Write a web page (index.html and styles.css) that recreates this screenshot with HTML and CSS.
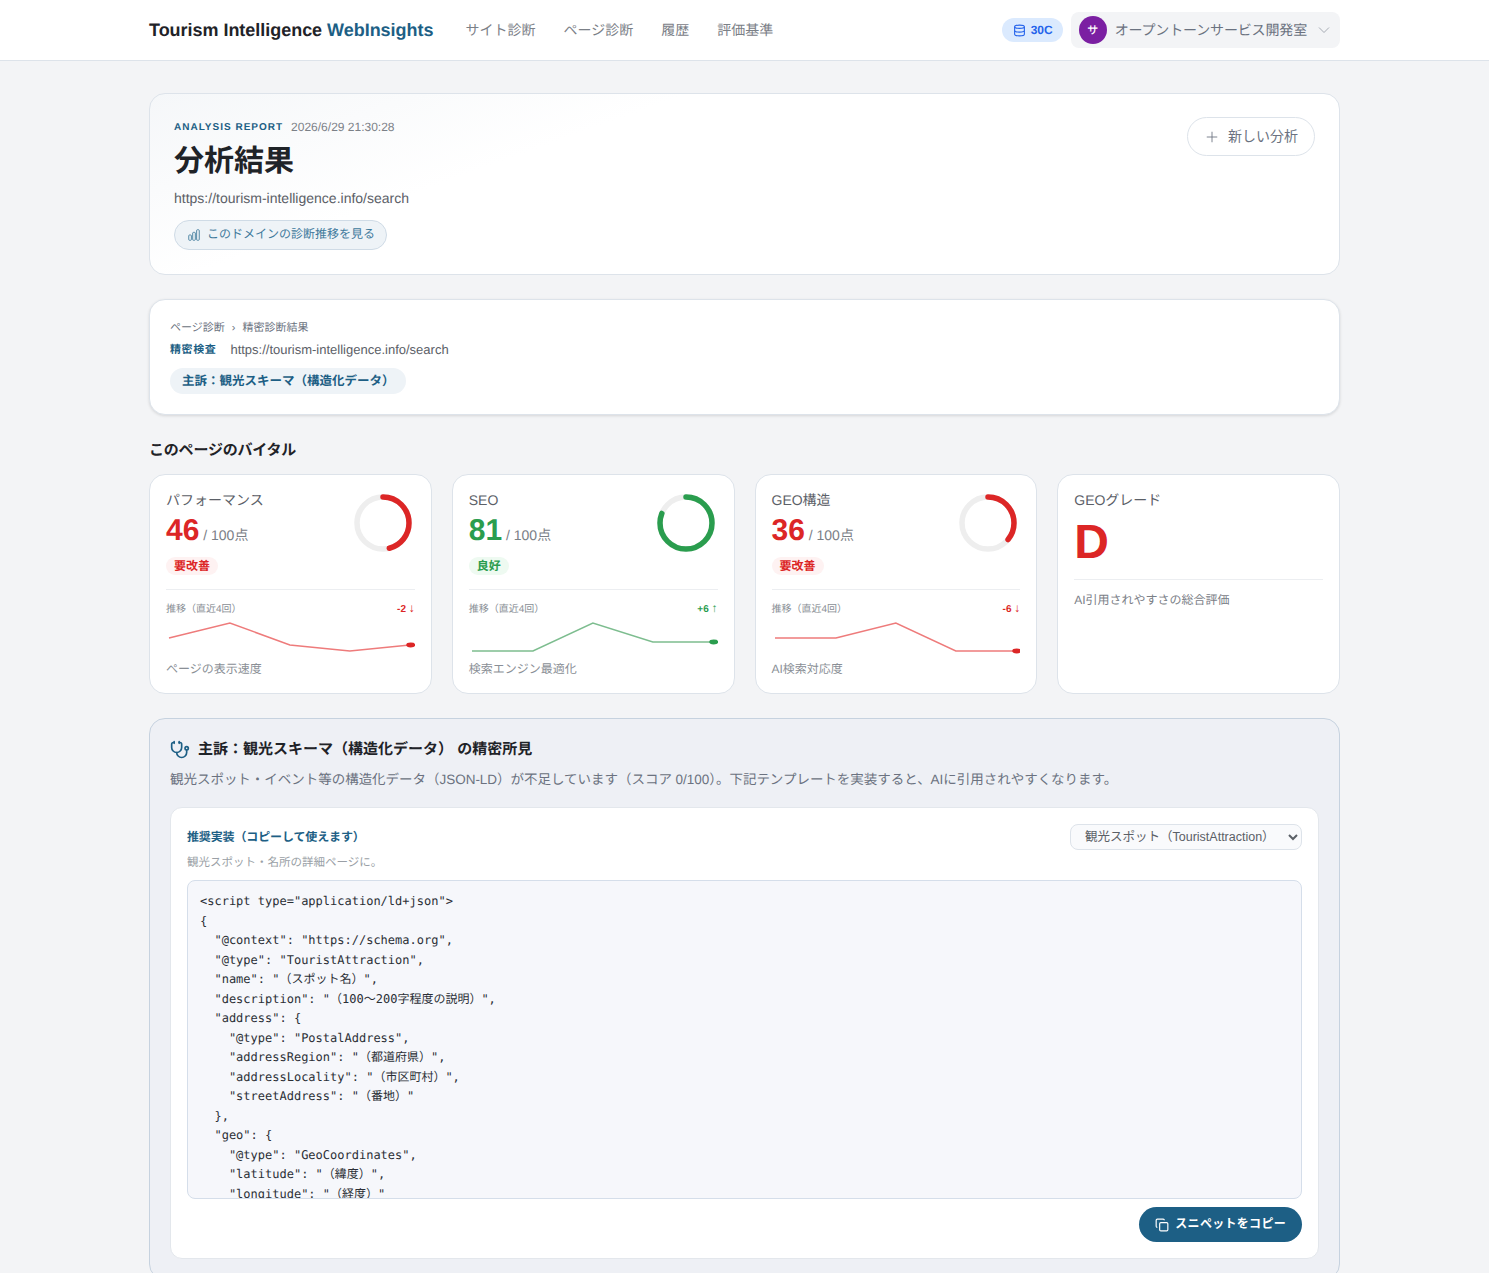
FILE: index.html
```html
<!DOCTYPE html>
<html lang="ja">

<head>
  <title>分析結果 - Tourism Intelligence WebInsights</title>
  <link rel="stylesheet" href="styles.css">
</head>

<body>
  <header class="topbar">
    <div class="topbar-inner">
      <div class="brand">Tourism Intelligence <span class="brand-accent">WebInsights</span></div>
      <nav class="nav">
        <a>サイト診断</a>
        <a>ページ診断</a>
        <a>履歴</a>
        <a>評価基準</a>
      </nav>
      <div class="credit">
        <svg class="credit-icon" viewBox="0 0 24 24" fill="none" stroke="currentColor" stroke-width="2">
          <ellipse cx="12" cy="5" rx="9" ry="3" />
          <path d="M3 5v14a9 3 0 0 0 18 0V5" />
          <path d="M3 12a9 3 0 0 0 18 0" />
        </svg>
        30C
      </div>
      <div class="account">
        <span class="avatar">サ</span>
        <span class="account-name">オープントーンサービス開発室</span>
        <svg class="account-caret" viewBox="0 0 24 24" fill="none" stroke="currentColor" stroke-width="1.5">
          <path d="M2 7l10 10 10-10" />
        </svg>
      </div>
    </div>
  </header>

  <main class="page">
    <section class="card hero">
      <div>
        <div class="hero-meta">
          <span class="eyebrow">ANALYSIS REPORT</span>
          <span class="timestamp">2026/6/29 21:30:28</span>
        </div>
        <h1 class="hero-title">分析結果</h1>
        <div class="hero-url">https://tourism-intelligence.info/search</div>
        <a class="trend-link">
          <svg class="trend-icon" viewBox="0 0 24 24" fill="none" stroke="currentColor" stroke-width="1.5">
            <path d="M3 13.125C3 12.504 3.504 12 4.125 12h2.25c.621 0 1.125.504 1.125 1.125v6.75C7.5 20.496 6.996 21 6.375 21h-2.25A1.125 1.125 0 0 1 3 19.875v-6.75ZM9.75 8.625c0-.621.504-1.125 1.125-1.125h2.25c.621 0 1.125.504 1.125 1.125v11.25c0 .621-.504 1.125-1.125 1.125h-2.25a1.125 1.125 0 0 1-1.125-1.125V8.625ZM16.5 4.125c0-.621.504-1.125 1.125-1.125h2.25C20.496 3 21 3.504 21 4.125v15.75c0 .621-.504 1.125-1.125 1.125h-2.25a1.125 1.125 0 0 1-1.125-1.125V4.125Z" />
          </svg>
          <span class="lift">このドメインの診断推移を見る</span>
        </a>
      </div>
      <button class="new-btn">
        <svg class="new-icon" viewBox="0 0 24 24" fill="none" stroke="currentColor" stroke-width="1.5">
          <path d="M12 3v18M3 12h18" />
        </svg>
        <span class="lift">新しい分析</span>
      </button>
    </section>

    <section class="card detail">
      <div class="crumbs">ページ診断<span class="crumb-sep">›</span>精密診断結果</div>
      <div class="detail-row">
        <span class="detail-label">精密検査</span>
        <span class="detail-url">https://tourism-intelligence.info/search</span>
      </div>
      <span class="complaint">主訴：観光スキーマ（構造化データ）</span>
    </section>

    <h2 class="section-title">このページのバイタル</h2>

    <section class="vitals">
      <div class="vital">
        <div class="vital-top">
          <div>
            <div class="vital-name">パフォーマンス</div>
            <div class="vital-score"><b class="red">46</b> / 100点</div>
            <span class="chip chip-red">要改善</span>
          </div>
          <svg class="ring" viewBox="0 0 60 60">
            <circle class="ring-track" cx="30" cy="30" r="26" />
            <circle class="ring-value ring-red" cx="30" cy="30" r="26" pathLength="100" stroke-dasharray="46 100" />
          </svg>
        </div>
        <div class="trend">
          <div class="trend-head"><span>推移（直近4回）</span><b class="trend-delta red">-2 <span class="arrow">↓</span></b></div>
          <svg class="spark" viewBox="0 0 249 40">
            <polyline class="spark-line line-red" points="3,21 64,6 124,28 184,34 244,28" />
            <ellipse class="dot-red" cx="245" cy="28" rx="4.5" ry="2.4" />
          </svg>
        </div>
        <div class="vital-note">ページの表示速度</div>
      </div>

      <div class="vital">
        <div class="vital-top">
          <div>
            <div class="vital-name">SEO</div>
            <div class="vital-score"><b class="green">81</b> / 100点</div>
            <span class="chip chip-green">良好</span>
          </div>
          <svg class="ring" viewBox="0 0 60 60">
            <circle class="ring-track" cx="30" cy="30" r="26" />
            <circle class="ring-value ring-green" cx="30" cy="30" r="26" pathLength="100" stroke-dasharray="81 100" />
          </svg>
        </div>
        <div class="trend">
          <div class="trend-head"><span>推移（直近4回）</span><b class="trend-delta green">+6 <span class="arrow">↑</span></b></div>
          <svg class="spark" viewBox="0 0 249 40">
            <polyline class="spark-line line-green" points="3,34 64,34 124,6 184,25 244,25" />
            <ellipse class="dot-green" cx="245" cy="25" rx="4.5" ry="2.4" />
          </svg>
        </div>
        <div class="vital-note">検索エンジン最適化</div>
      </div>

      <div class="vital">
        <div class="vital-top">
          <div>
            <div class="vital-name">GEO構造</div>
            <div class="vital-score"><b class="red">36</b> / 100点</div>
            <span class="chip chip-red">要改善</span>
          </div>
          <svg class="ring" viewBox="0 0 60 60">
            <circle class="ring-track" cx="30" cy="30" r="26" />
            <circle class="ring-value ring-red" cx="30" cy="30" r="26" pathLength="100" stroke-dasharray="36 100" />
          </svg>
        </div>
        <div class="trend">
          <div class="trend-head"><span>推移（直近4回）</span><b class="trend-delta red">-6 <span class="arrow">↓</span></b></div>
          <svg class="spark" viewBox="0 0 249 40">
            <polyline class="spark-line line-red" points="3,21 64,21 124,6 184,34 244,34" />
            <ellipse class="dot-red" cx="245" cy="34" rx="4.5" ry="2.4" />
          </svg>
        </div>
        <div class="vital-note">AI検索対応度</div>
      </div>

      <div class="vital">
        <div class="vital-name">GEOグレード</div>
        <div class="grade red">D</div>
        <div class="grade-note">AI引用されやすさの総合評価</div>
      </div>
    </section>

    <section class="finding">
      <h3 class="finding-title">
        <svg class="finding-icon" viewBox="0 0 24 24" fill="none" stroke="currentColor" stroke-width="2" stroke-linecap="round" stroke-linejoin="round">
          <path d="M11 2v2" />
          <path d="M5 2v2" />
          <path d="M5 3H4a2 2 0 0 0-2 2v4a6 6 0 0 0 12 0V5a2 2 0 0 0-2-2h-1" />
          <path d="M8 15a6 6 0 0 0 12 0v-3" />
          <circle cx="20" cy="10" r="2" />
        </svg>
        主訴：観光スキーマ（構造化データ） の精密所見
      </h3>
      <p class="finding-text">観光スポット・イベント等の構造化データ（JSON-LD）が不足しています（スコア 0/100）。下記テンプレートを実装すると、AIに引用されやすくなります。</p>

      <div class="snippet">
        <div class="snippet-head">
          <span class="snippet-title">推奨実装（コピーして使えます）</span>
          <select class="snippet-select">
            <option>観光スポット（TouristAttraction）</option>
          </select>
        </div>
        <div class="snippet-sub">観光スポット・名所の詳細ページに。</div>
        <pre class="code">&lt;script type="application/ld+json"&gt;
{
  "@context": "https://schema.org",
  "@type": "TouristAttraction",
  "name": "（スポット名）",
  "description": "（100〜200字程度の説明）",
  "address": {
    "@type": "PostalAddress",
    "addressRegion": "（都道府県）",
    "addressLocality": "（市区町村）",
    "streetAddress": "（番地）"
  },
  "geo": {
    "@type": "GeoCoordinates",
    "latitude": "（緯度）",
    "longitude": "（経度）"
  }
}
&lt;/script&gt;</pre>
        <div class="snippet-foot">
          <button class="copy-btn">
            <svg class="copy-icon" viewBox="0 0 24 24" fill="none" stroke="currentColor" stroke-width="2">
              <rect x="8" y="8" width="14" height="14" rx="2" />
              <path d="M4 16a2 2 0 0 1-2-2V4a2 2 0 0 1 2-2h10a2 2 0 0 1 2 2" />
            </svg>
            <span class="lift">スニペットをコピー</span>
          </button>
        </div>
      </div>
    </section>
  </main>
</body>

</html>
```

FILE: styles.css
```css
* {
  box-sizing: border-box;
}

html,
body {
  height: 100%;
  overflow: hidden;
}

body {
  margin: 0;
  background: #f3f4f6;
  color: #1f2328;
  font-family: "Liberation Sans", "Noto Sans CJK JP", sans-serif;
  text-rendering: geometricPrecision;
}

.red {
  color: #dc2626;
}

.green {
  color: #2a9d4e;
}

/* japanese text sits a little high in its row */
.lift {
  padding-bottom: 4px;
}

/* top bar */
.topbar {
  height: 61px;
  background: white;
  border-bottom: 1px solid #dde3ea;
}

.topbar-inner {
  width: 1191px;
  height: 60px;
  margin: 0 auto;
  display: flex;
  align-items: center;
}

.brand {
  font-size: 18px;
  font-weight: bold;
  letter-spacing: -0.03px;
  white-space: nowrap;
}

.brand-accent {
  color: #1d5f85;
}

.nav {
  display: flex;
  gap: 28px;
  margin-left: 32px;
  font-size: 14px;
  color: #7b8087;
}

.credit {
  display: flex;
  align-items: center;
  gap: 5px;
  height: 24px;
  margin-left: auto;
  padding: 0 10px 0 11px;
  border-radius: 12px;
  background: #dbeafe;
  color: #2563eb;
  font-size: 12px;
  font-weight: bold;
}

.credit-icon {
  width: 13px;
  height: 13px;
}

.account {
  display: flex;
  align-items: center;
  height: 36px;
  margin-left: 8px;
  padding: 0 10px 0 8px;
  border-radius: 8px;
  background: #f3f4f6;
  color: #6b7280;
  font-size: 14px;
}

.avatar {
  display: flex;
  justify-content: center;
  align-items: center;
  width: 28px;
  height: 28px;
  border-radius: 50%;
  background: #7b1fa2;
  color: white;
  font-size: 11px;
  font-weight: 500;
}

.account-name {
  margin-left: 8px;
  letter-spacing: -0.15px;
}

.account-caret {
  width: 12px;
  height: 12px;
  margin-left: 11px;
  color: #8b929c;
}

/* page */
.page {
  width: 1191px;
  margin: 0 auto;
  padding-top: 32px;
}

.card {
  background: white;
  border: 1px solid #dde3ea;
  border-radius: 16px;
}

.hero {
  display: flex;
  justify-content: space-between;
  align-items: flex-start;
  height: 182px;
  padding: 23px 24px 24px;
  background: linear-gradient(160deg, #f5f7f9 0%, white 32%);
}

.hero-meta {
  display: flex;
  align-items: center;
  gap: 8px;
  height: 19px;
}

.eyebrow {
  padding-top: 2px;
  color: #1d5f85;
  font-size: 10px;
  font-weight: bold;
  letter-spacing: 1px;
}

.timestamp {
  color: #7b8087;
  font-size: 12px;
}

.hero-title {
  margin: 6px 0 0;
  font-size: 30px;
  line-height: 40px;
  font-weight: bold;
}

.hero-url {
  margin-top: 6px;
  color: #5b6067;
  font-size: 14px;
  line-height: 20px;
}

.trend-link {
  display: inline-flex;
  align-items: center;
  gap: 6px;
  height: 30px;
  margin-top: 12px;
  padding: 0 11px 0 12px;
  border: 1px solid #cfdbe6;
  border-radius: 15px;
  background: #eef3f7;
  color: #3f7a9c;
  font-size: 12px;
}

.trend-icon {
  width: 14px;
  height: 14px;
}

.new-btn {
  display: flex;
  align-items: center;
  gap: 9px;
  height: 39px;
  padding: 0 16px 0 17px;
  border: 1px solid #dde3ea;
  border-radius: 20px;
  background: white;
  color: #6b7280;
  font-family: inherit;
  font-size: 14px;
}

.new-icon {
  width: 14px;
  height: 14px;
}

.detail {
  height: 116px;
  margin-top: 24px;
  padding: 20px;
  box-shadow: 0 1px 3px rgba(0, 0, 0, 0.12);
}

.crumbs {
  color: #6b7280;
  font-size: 11px;
  line-height: 16px;
}

.crumb-sep {
  margin: 0 7px;
}

.detail-row {
  display: flex;
  align-items: center;
  gap: 14px;
  margin-top: 5px;
  line-height: 18px;
}

.detail-label {
  color: #1d5f85;
  font-size: 11px;
  font-weight: bold;
  letter-spacing: 0.6px;
}

.detail-url {
  color: #5b6067;
  font-size: 13px;
}

.complaint {
  display: inline-block;
  height: 26px;
  margin-top: 9px;
  padding: 0 11px 0 12px;
  border-radius: 13px;
  background: #eef3f7;
  color: #1d5f85;
  font-size: 12.5px;
  font-weight: bold;
  line-height: 27px;
}

.section-title {
  margin: 26px 0 13px;
  font-size: 15px;
  line-height: 20px;
  font-weight: bold;
  letter-spacing: -0.2px;
}

/* vitals */
.vitals {
  display: grid;
  grid-template-columns: repeat(4, 1fr);
  gap: 20px;
}

.vital {
  display: flex;
  flex-direction: column;
  height: 220px;
  padding: 15px 16px 16px;
  background: white;
  border: 1px solid #dde3ea;
  border-radius: 16px;
}

.vital-top {
  display: flex;
  flex: none;
  justify-content: space-between;
  height: 100px;
  border-bottom: 1px solid #eceef1;
}

.vital-name {
  color: #5b6067;
  font-size: 14px;
  line-height: 20px;
}

.vital-score {
  margin-top: 4px;
  color: #7b8087;
  font-size: 14px;
  line-height: 34px;
}

.vital-score b {
  font-size: 30px;
}

.chip {
  display: inline-block;
  height: 18px;
  margin-top: 5px;
  padding: 0 8px;
  border-radius: 9px;
  font-size: 12px;
  font-weight: bold;
  line-height: 18px;
}

.chip-red {
  background: #fef2f2;
  color: #dc2626;
}

.chip-green {
  background: #eefaf1;
  color: #2a9d4e;
}

.ring {
  width: 60px;
  height: 60px;
  margin: 3px 2px 0 0;
  transform: rotate(-90deg);
}

.ring-track,
.ring-value {
  fill: none;
  stroke-width: 5.5;
}

.ring-track {
  stroke: #eeeeee;
}

.ring-value {
  stroke-linecap: round;
}

.ring-red {
  stroke: #dc2626;
}

.ring-green {
  stroke: #2a9d4e;
}

.trend-head {
  display: flex;
  justify-content: space-between;
  margin: 13px 0 0;
  color: #8a8f96;
  font-size: 10px;
  line-height: 14px;
}

.trend-delta {
  white-space: nowrap;
}

.arrow {
  font-size: 12px;
  font-weight: normal;
  line-height: 10px;
}

.spark {
  display: block;
  width: 100%;
  height: 40px;
}

.spark-line {
  fill: none;
  stroke-width: 1.5;
}

.line-red {
  stroke: #ee7b7b;
}

.line-green {
  stroke: #7dbd8f;
}

.dot-red {
  fill: #dc2626;
}

.dot-green {
  fill: #2a9d4e;
}

.vital-note {
  margin-top: 3px;
  color: #8a8f96;
  font-size: 12px;
  line-height: 18px;
}

.grade {
  margin-top: 5px;
  height: 64px;
  font-size: 48px;
  font-weight: bold;
  line-height: 56px;
}

.grade-note {
  padding-top: 11px;
  border-top: 1px solid #eceef1;
  color: #7b8087;
  font-size: 12px;
  line-height: 18px;
}

/* finding panel */
.finding {
  margin-top: 24px;
  padding: 20px;
  border: 1px solid #c6d2df;
  border-radius: 16px;
  background: #eef0f5;
}

.finding-title {
  display: flex;
  align-items: center;
  gap: 8px;
  margin: 1px 0 0;
  font-size: 15px;
  line-height: 20px;
  font-weight: bold;
}

.finding-icon {
  width: 20px;
  height: 20px;
  color: #1d5f85;
}

.finding-text {
  margin: 9px 0 0;
  color: #6b7280;
  font-size: 13.5px;
  letter-spacing: -0.025px;
  line-height: 21px;
}

.snippet {
  margin-top: 17px;
  padding: 16px;
  border: 1px solid #e3e7ec;
  border-radius: 12px;
  background: white;
}

.snippet-head {
  display: flex;
  justify-content: space-between;
  align-items: center;
  height: 26px;
}

.snippet-title {
  padding-bottom: 1px;
  color: #1d5f85;
  font-size: 12px;
  font-weight: bold;
  letter-spacing: -0.13px;
}

.snippet-select {
  width: 232px;
  height: 26px;
  padding: 0 10px;
  border: 1px solid #dde3ea;
  border-radius: 8px;
  background: #f9fafc;
  color: #5b6067;
  font-family: inherit;
  font-size: 12.5px;
}

.snippet-sub {
  margin-top: 5px;
  color: #9a9fa6;
  font-size: 11.5px;
  line-height: 16px;
}

.code {
  height: 319px;
  margin: 9px 0 0;
  padding: 11px 12px;
  overflow: hidden;
  border: 1px solid #d5deea;
  border-radius: 8px;
  background: #f6f7fb;
  color: #2b2f36;
  font-family: "DejaVu Sans Mono", "Noto Sans CJK JP", monospace;
  font-size: 12px;
  line-height: 19.5px;
}

.snippet-foot {
  display: flex;
  justify-content: flex-end;
  margin-top: 8px;
}

.copy-btn {
  display: flex;
  align-items: center;
  gap: 6px;
  height: 35px;
  padding: 0 16px;
  border: none;
  border-radius: 18px;
  background: #1d5f85;
  color: white;
  font-family: inherit;
  font-size: 12px;
  font-weight: bold;
  letter-spacing: 0.3px;
}

.copy-icon {
  width: 14px;
  height: 14px;
}
```
